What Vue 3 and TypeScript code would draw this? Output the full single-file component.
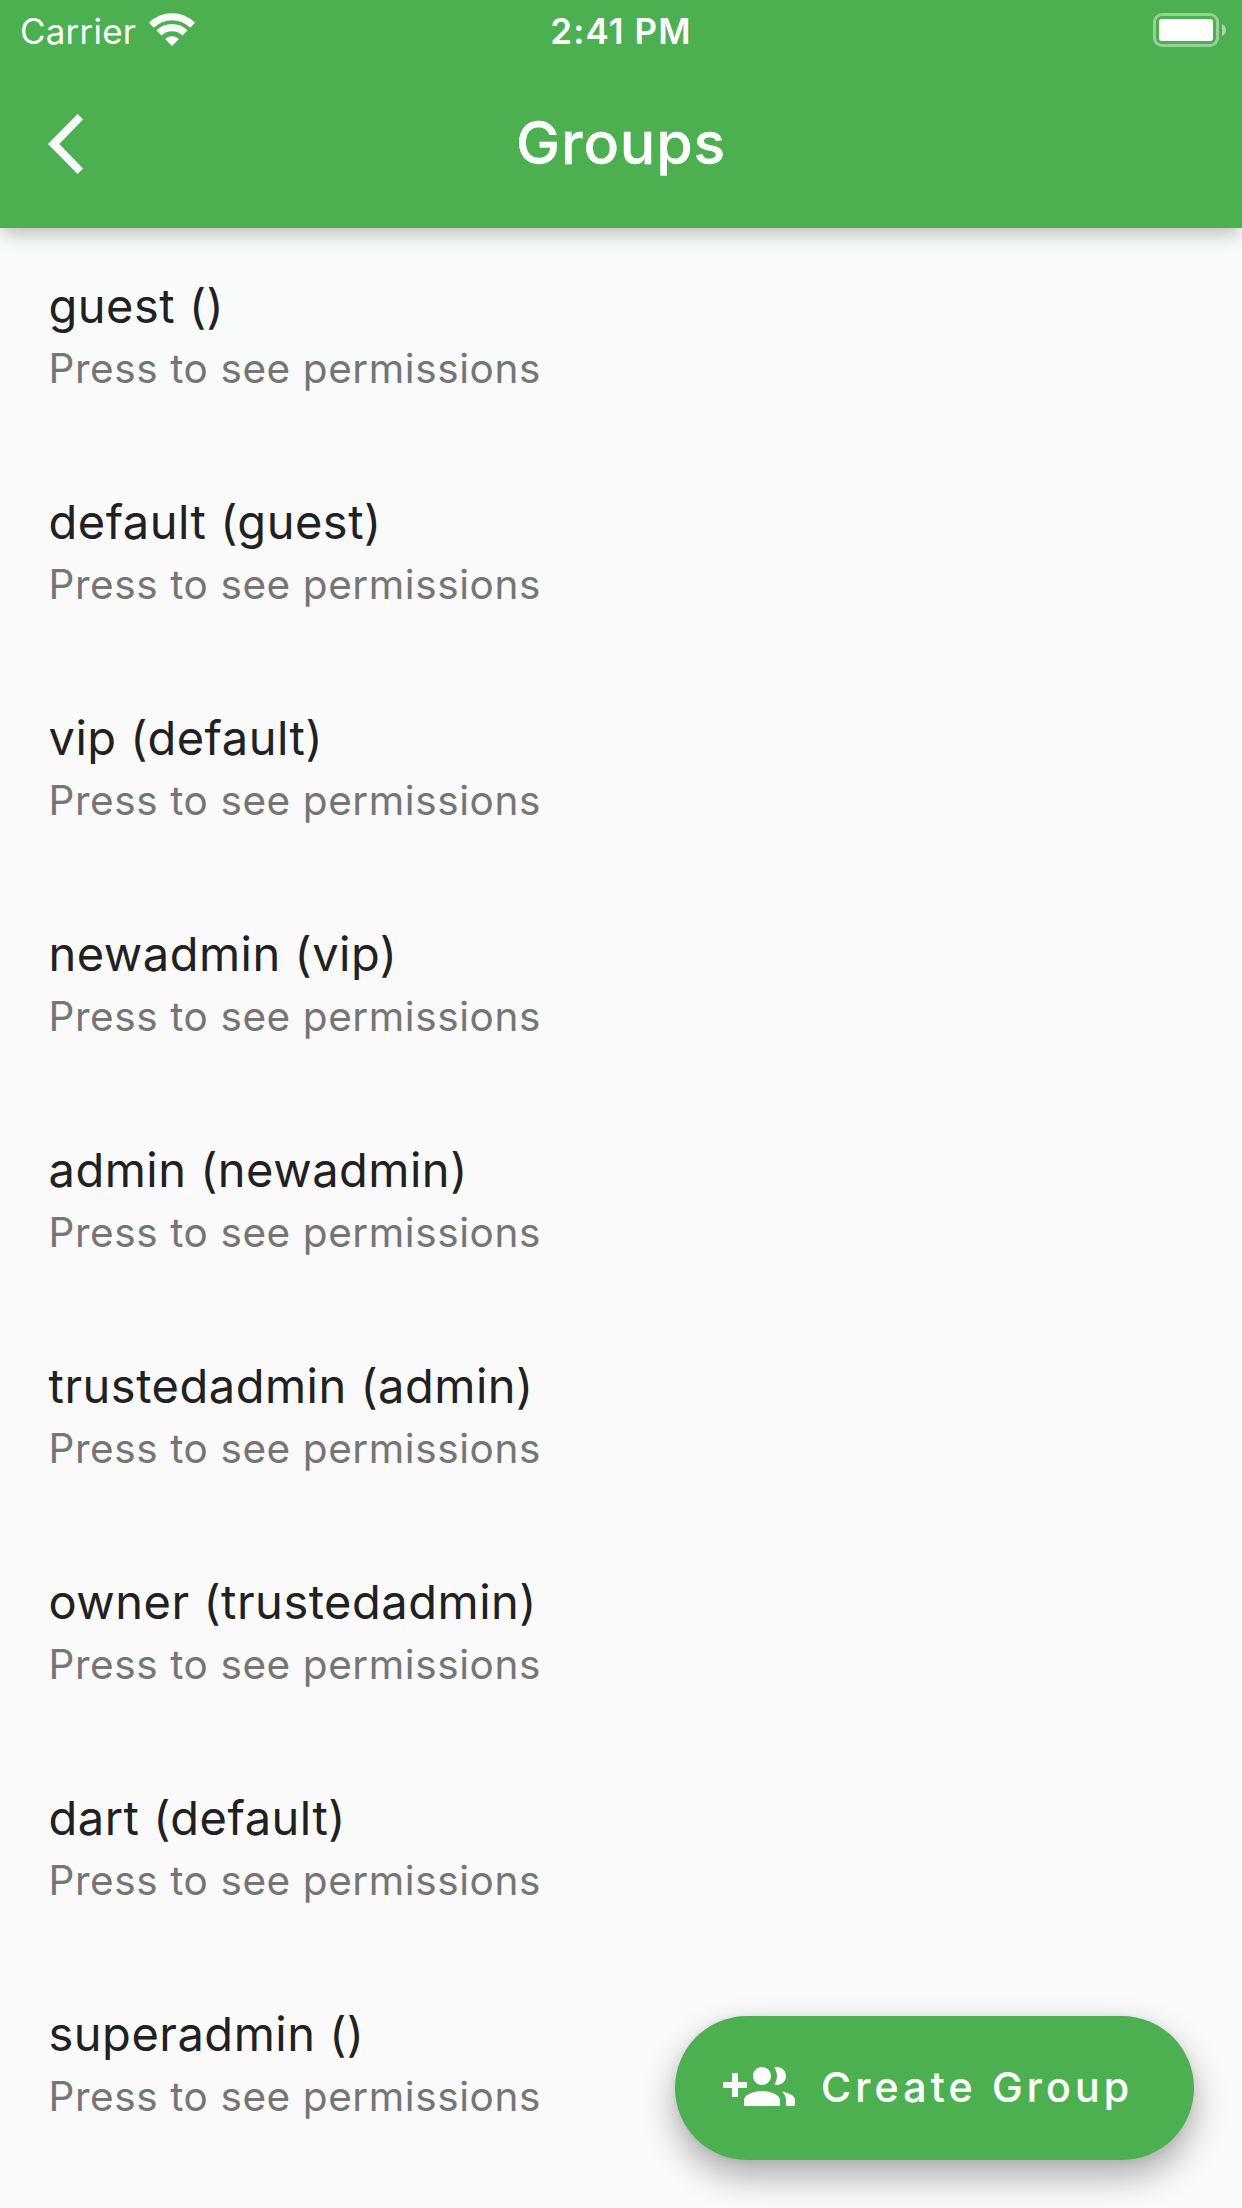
<script setup lang="ts">
interface Group {
  name: string
  parent: string
}

const groups: Group[] = [
  { name: 'guest', parent: '' },
  { name: 'default', parent: 'guest' },
  { name: 'vip', parent: 'default' },
  { name: 'newadmin', parent: 'vip' },
  { name: 'admin', parent: 'newadmin' },
  { name: 'trustedadmin', parent: 'admin' },
  { name: 'owner', parent: 'trustedadmin' },
  { name: 'dart', parent: 'default' },
  { name: 'superadmin', parent: '' },
]
</script>

<template>
  <div class="screen">
    <header class="app-bar">
      <div class="status">
        <div class="status-left">
          <span class="carrier">Carrier</span>
          <svg class="wifi" width="48" height="36" viewBox="0 0 48 36" fill="none" stroke="#fff">
            <path d="M3.3 12.3A29.3 29.3 0 0 1 44.7 12.3" stroke-width="7" />
            <path d="M11 20A18.4 18.4 0 0 1 37 20" stroke-width="7.2" />
            <path d="M24 33L17 26Q24 20 31 26Z" fill="#fff" stroke="none" />
          </svg>
        </div>
        <span class="time">2:41 PM</span>
        <svg class="battery" width="74" height="34" viewBox="0 0 74 34">
          <rect x="1.5" y="1.5" width="63" height="31" rx="7.5" fill="none" stroke="#fff" stroke-opacity=".42" stroke-width="3" />
          <rect x="6" y="6" width="54" height="22" rx="3" fill="#fff" />
          <path d="M69 11Q73 13 73 17T69 23Z" fill="#fff" fill-opacity=".5" />
        </svg>
      </div>
      <div class="toolbar">
        <svg class="back" width="72" height="72" viewBox="0 0 24 24" fill="#fff">
          <path d="M9.9 2L0 12l9.9 10 1.77-1.8L3.75 12l7.92-8.2z" />
        </svg>
        <h1 class="title">Groups</h1>
      </div>
    </header>

    <ul class="list">
      <li v-for="group in groups" :key="group.name" class="row">
        <span class="name">{{ group.name }} ({{ group.parent }})</span>
        <span class="hint">Press to see permissions</span>
      </li>
    </ul>

    <button class="fab" type="button">
      <svg width="72" height="72" viewBox="0 0 24 24" fill="#fff">
        <path d="M8 10H5V7H3v3H0v2h3v3h2v-3h3v-2zm10 1c1.66 0 2.99-1.34 2.99-3S19.66 5 18 5c-.32 0-.63.05-.91.14.57.81.9 1.79.9 2.86s-.34 2.04-.9 2.86c.28.09.59.14.91.14zm-5 0c1.66 0 2.99-1.34 2.99-3S14.66 5 13 5c-1.66 0-3 1.34-3 3s1.34 3 3 3zm6.62 2.16c.83.73 1.38 1.66 1.38 2.84v2h3v-2c0-1.54-2.37-2.49-4.38-2.84zM13 13c-2 0-6 1-6 3v2h12v-2c0-2-4-3-6-3z" />
      </svg>
      <span class="fab-label">Create Group</span>
    </button>
  </div>
</template>

<style>
body {
  margin: 0;
  background: #fafafa;
}
</style>

<style scoped>
.screen {
  position: relative;
  width: 1242px;
  height: 2208px;
  overflow: hidden;
  background: #fafafa;
  font-family: Inter, Roboto, sans-serif;
  font-optical-sizing: none;
}

.app-bar {
  position: relative;
  z-index: 1;
  height: 228px;
  background: #4caf50;
  color: #fff;
  box-shadow: 0 9px 18px -3px rgba(0, 0, 0, 0.25);
}

.status {
  display: grid;
  grid-template-columns: 1fr auto 1fr;
  align-items: center;
  height: 60px;
  box-sizing: border-box;
  padding: 0 15px;
}

.status-left {
  display: flex;
  align-items: center;
  padding-left: 5px;
}

.carrier {
  font-size: 35px;
  line-height: 62px;
  letter-spacing: 0.2px;
}

.wifi {
  margin-left: 12px;
}

.time {
  font-size: 35px;
  font-weight: 600;
  line-height: 62px;
  letter-spacing: 1.1px;
}

.battery {
  justify-self: end;
  margin-bottom: 2px;
}

.toolbar {
  display: grid;
  grid-template-columns: 1fr auto 1fr;
  align-items: center;
  height: 168px;
  padding: 0 48px;
}

.title {
  margin: 0 0 2px;
  font-size: 59px;
  font-weight: 500;
  line-height: 166px;
  letter-spacing: 0.8px;
  -webkit-text-stroke: 0.3px #fff;
}

.list {
  margin: 0;
  padding: 0;
  list-style: none;
}

.row {
  display: flex;
  flex-direction: column;
  height: 216px;
  box-sizing: border-box;
  padding: 48px 48px 0;
}

.row:first-child {
  background: #f9fbfa;
}

.name {
  padding-left: 0.5px;
  font-size: 47px;
  line-height: 60px;
  letter-spacing: 0.5px;
  color: #212121;
}

.hint {
  margin-top: 3px;
  padding-left: 0.5px;
  font-size: 40.5px;
  line-height: 60px;
  letter-spacing: 0.58px;
  color: #757575;
}

.fab {
  position: absolute;
  right: 48px;
  bottom: 48px;
  display: flex;
  align-items: center;
  gap: 26px;
  width: 519px;
  height: 144px;
  padding: 0 0 0 48px;
  border: 0;
  border-radius: 72px;
  background: #4caf50;
  color: #fff;
  font-family: inherit;
  font-optical-sizing: none;
  box-shadow: 0 16px 34px rgba(0, 0, 0, 0.32), 0 0 8px rgba(0, 0, 0, 0.06);
}

.fab-label {
  margin-top: -2px;
  font-size: 41px;
  font-weight: 500;
  line-height: 60px;
  letter-spacing: 4.2px;
  white-space: nowrap;
  -webkit-text-stroke: 0.2px #fff;
}
</style>
